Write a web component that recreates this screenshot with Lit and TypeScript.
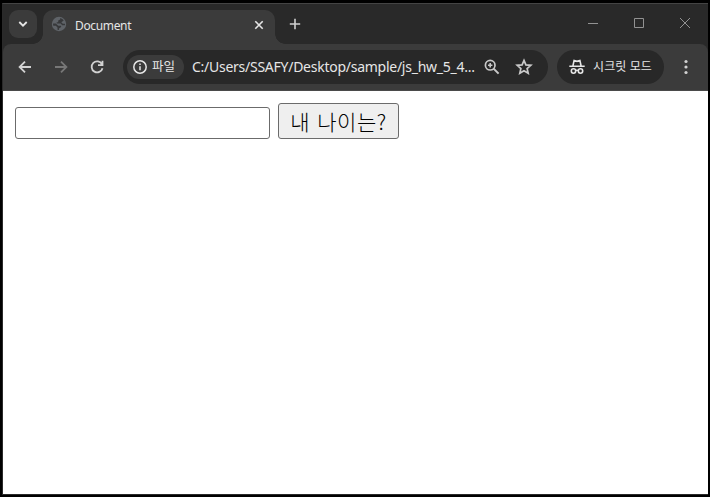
import { LitElement, html, css } from "lit";
import { customElement } from "lit/decorators.js";

@customElement("app-root")
export class AppRoot extends LitElement {
  static styles = css`
    :host {
      display: block;
      box-sizing: border-box;
      width: 710px;
      height: 497px;
      padding: 3px 1px 2px 2px;
      background: #000;
      overflow: hidden;
      font-family: "Noto Sans", "Noto Sans CJK KR", sans-serif;
    }
    * { box-sizing: border-box; }
    svg { display: block; flex: none; overflow: visible; }
    .window {
      display: flex;
      flex-direction: column;
      height: 492px;
      border: 1px solid #2a2a2a;
      border-top-color: #444;
      border-right-width: 0;
      width: 706px;
      background: #292929;
    }
    .tabs {
      display: flex;
      height: 40px;
      padding: 6px 0 0 6px;
      flex: none;
    }
    .search {
      display: flex;
      align-items: center;
      justify-content: center;
      width: 28px;
      height: 28px;
      border-radius: 9px;
      background: #3b3b3b;
    }
    .tab {
      position: relative;
      display: flex;
      align-items: center;
      width: 232px;
      height: 34px;
      margin-left: 6px;
      padding: 0 11px 5px 8px;
      border-radius: 10px 10px 0 0;
      background: #3b3b3b;
    }
    .tab::before,
    .tab::after {
      content: "";
      position: absolute;
      bottom: 0;
      width: 10px;
      height: 10px;
    }
    .tab::before {
      left: -10px;
      background: radial-gradient(circle at 0 0, transparent 9.5px, #3b3b3b 10px);
    }
    .tab::after {
      right: -10px;
      background: radial-gradient(circle at 100% 0, transparent 9.5px, #3b3b3b 10px);
    }
    .globe { margin-top: -1px; }
    .title {
      flex: 1;
      margin-left: 8px;
      color: #e6e6e6;
      font-size: 12px;
      line-height: 18px;
      letter-spacing: -0.35px;
      padding-top: 2px;
    }
    .plus { margin: 8px 0 0 14px; }
    .controls {
      display: flex;
      gap: 36px;
      margin: 8px 18px 0 auto;
    }
    .toolbar {
      display: flex;
      align-items: center;
      flex: none;
      height: 47px;
      padding: 0 0 1px 14px;
      border-radius: 8px 8px 0 0;
      border-bottom: 1px solid #4a4a4a;
      background: #3b3b3b;
    }
    .nav { display: flex; gap: 20px; width: 106px; }
    .address {
      display: flex;
      align-items: center;
      width: 425px;
      height: 34px;
      padding: 0 15px 0 4px;
      border-radius: 17px;
      background: #282828;
    }
    .chip {
      display: flex;
      align-items: center;
      width: 57px;
      height: 24px;
      padding-left: 5px;
      gap: 4px;
      border-radius: 12px;
      background: #3b3b3b;
      color: #e6e6e6;
      font-size: 12.5px;
      line-height: 18px;
      white-space: nowrap;
    }
    .url {
      width: 292px;
      margin-left: 8px;
      color: #e6e6e6;
      font-size: 14px;
      line-height: 20px;
      letter-spacing: -0.26px;
      white-space: nowrap;
    }
    .star { margin-left: auto; }
    .incognito {
      display: flex;
      align-items: center;
      width: 107px;
      height: 34px;
      margin-left: 9px;
      padding-left: 12px;
      gap: 8px;
      border-radius: 17px;
      background: #282828;
      color: #e6e6e6;
      font-size: 12px;
      line-height: 18px;
      letter-spacing: 0.1px;
      white-space: nowrap;
    }
    .more { margin-left: 14px; }
    .page {
      display: flex;
      align-items: flex-end;
      gap: 8px;
      flex: 1;
      padding: 12px 12px 355px;
      background: #fff;
    }
    .field {
      width: 255px;
      height: 32px;
      margin: 0;
      border: 1px solid #6b6b6b;
      border-radius: 3px;
      background: #fff;
      outline: none;
    }
    .age {
      width: 121px;
      height: 36px;
      margin: 0;
      padding: 0;
      border: 1px solid #6b6b6b;
      border-radius: 3px;
      background: #efefef;
      color: #000;
      font: 300 21px/32px "Noto Sans CJK KR", sans-serif;
      letter-spacing: 0.5px;
      word-spacing: 2px;
      white-space: nowrap;
    }
  `;

  render() {
    return html`
      <div class="window">
        <div class="tabs">
          <div class="search">
            <svg width="10" height="8" viewBox="0 0 10 8" fill="none" stroke="#e6e6e6" stroke-width="1.8"><path d="M1.3 2 5 5.7 8.7 2" /></svg>
          </div>
          <div class="tab">
            <svg class="globe" width="16" height="16" viewBox="0 0 16 16">
              <circle cx="8" cy="8" r="7.2" fill="#5f6368" />
              <path d="M9.200 2.100v1.400L7.200 4.600v1.600H5.700v1.400h4.100l1.300 1.700h2.800c.2-.5.200-.9.100-1.500h-2.200L10.300 6.300l2.400-1.700C11.800 3.300 10.700 2.500 9.200 2.100zM2.100 7.400c-.1.800 0 1.600.2 2.300h2.500l1.700 1.700v2.400l1.500.2v-1.600l2.100-1.300V9.700H7.300L4.800 7.400z" fill="#37383a" />
            </svg>
            <div class="title">Document</div>
            <svg width="10" height="10" viewBox="0 0 10 10" stroke="#e6e6e6" stroke-width="1.6"><path d="m1.3 1.3 7.4 7.4m0-7.4-7.4 7.4" /></svg>
          </div>
          <svg class="plus" width="12" height="12" viewBox="0 0 12 12" stroke="#cfcfcf" stroke-width="1.6"><path d="M6 .8v10.4M.8 6h10.4" /></svg>
          <div class="controls">
            <svg width="10" height="10" viewBox="0 0 10 10" stroke="#929292"><path d="M0 5.5h10" /></svg>
            <svg width="10" height="10" viewBox="0 0 10 10" stroke="#929292" fill="none"><path d="M.5.5h9v9h-9z" /></svg>
            <svg width="10" height="10" viewBox="0 0 10 10" stroke="#929292"><path d="m0 0 10 10m0-10L0 10" /></svg>
          </div>
        </div>
        <div class="toolbar">
          <div class="nav">
            <svg width="16" height="16" viewBox="0 0 16 16" fill="none" stroke="#d2d2d2" stroke-width="1.8"><path d="M14 8H3M8 2.600 2.600 8 8 13.400" /></svg>
            <svg width="16" height="16" viewBox="0 0 16 16" fill="none" stroke="#777" stroke-width="1.8"><path d="M2 8h11M8 2.600 13.400 8 8 13.400" /></svg>
            <svg width="16" height="16" viewBox="0 0 16 16" fill="none" stroke="#d2d2d2" stroke-width="1.8"><path d="M13 5.200A5.500 5.500 0 1 0 13.500 9.200M13.500 1.700v4.500H9" /></svg>
          </div>
          <div class="address">
            <div class="chip">
              <svg width="16" height="16" viewBox="0 0 16 16" fill="none" stroke="#e6e6e6" stroke-width="1.5"><circle cx="8" cy="8" r="6.2" /><path d="M8 7.200v4M8 4.600v1.500" /></svg>
              <span>파일</span>
            </div>
            <div class="url">C:/Users/SSAFY/Desktop/sample/js_hw_5_4...</div>
            <svg width="16" height="16" viewBox="0 0 16 16" fill="none" stroke="#c9c9c9"><circle cx="6.2" cy="6.2" r="4.8" stroke-width="1.7" /><path d="m9.600 9.600 5 5" stroke-width="2" /><path d="M6.200 4v4.400M4 6.200h4.400" stroke-width="1.6" /></svg>
            <svg class="star" width="18" height="18" viewBox="0 0 18 18" fill="none" stroke="#c9c9c9" stroke-width="1.7"><path d="m9 2.400 1.900 4.500 4.900.4-3.700 3.200 1.100 4.800L9 12.800l-4.200 2.500 1.100-4.800-3.700-3.200 4.900-.4z" /></svg>
          </div>
          <div class="incognito">
            <svg width="16" height="16" viewBox="0 0 16 16" fill="none" stroke="#e6e6e6" stroke-width="1.6"><path d="M.3 7.300h15.400M3.900 7 5.100 1.400 8 2.300l2.900-.9L12.100 7" /><circle cx="4.5" cy="12" r="2.2" /><circle cx="11.5" cy="12" r="2.2" /><path d="M6.600 11.600q1.400-.7 2.800 0" /></svg>
            <span>시크릿 모드</span>
          </div>
          <svg class="more" width="16" height="16" viewBox="0 0 16 16" fill="#d2d2d2"><circle cx="8" cy="2.5" r="1.6" /><circle cx="8" cy="8" r="1.6" /><circle cx="8" cy="13.5" r="1.6" /></svg>
        </div>
        <div class="page">
          <input class="field" type="text" />
          <button class="age">내 나이는?</button>
        </div>
      </div>
    `;
  }
}
